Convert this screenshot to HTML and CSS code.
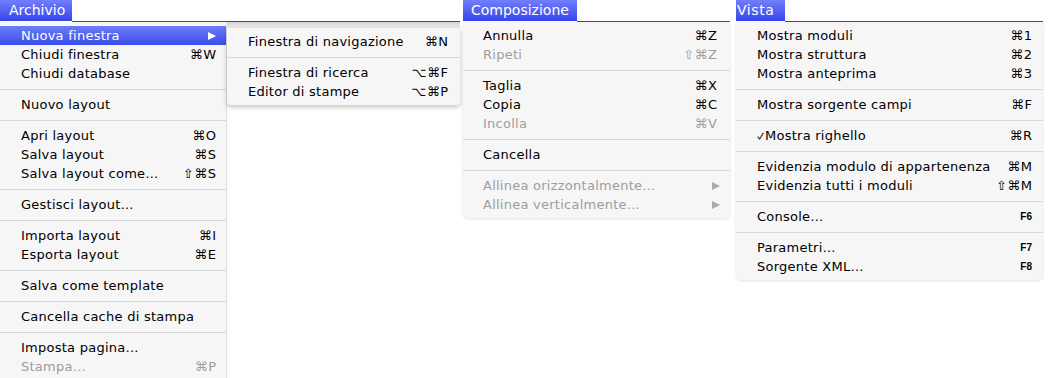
FILE: index.html
```html
<!DOCTYPE html>
<html lang="it">

<head>
    <meta charset="UTF-8">
    <title>Menu</title>
    <link rel="stylesheet" href="styles.css">
</head>

<body>

    <!-- Archivio -->
    <div class="shot shot-file">
        <div class="menubar">
            <div class="title title-file">Archivio</div>
            <div class="bar-rest"></div>
        </div>
        <div class="shot-body">
            <ul class="menu menu-file">
                <li class="item active"><span>Nuova finestra</span><span class="arrow"></span></li>
                <li class="item"><span>Chiudi finestra</span><span class="key">⌘W</span></li>
                <li class="item"><span>Chiudi database</span></li>
                <li class="sep"></li>
                <li class="item"><span>Nuovo layout</span></li>
                <li class="sep"></li>
                <li class="item"><span>Apri layout</span><span class="key">⌘O</span></li>
                <li class="item"><span>Salva layout</span><span class="key">⌘S</span></li>
                <li class="item"><span>Salva layout come…</span><span class="key">⇧⌘S</span></li>
                <li class="sep"></li>
                <li class="item"><span>Gestisci layout…</span></li>
                <li class="sep"></li>
                <li class="item"><span>Importa layout</span><span class="key">⌘I</span></li>
                <li class="item"><span>Esporta layout</span><span class="key">⌘E</span></li>
                <li class="sep"></li>
                <li class="item"><span>Salva come template</span></li>
                <li class="sep"></li>
                <li class="item"><span>Cancella cache di stampa</span></li>
                <li class="sep"></li>
                <li class="item"><span>Imposta pagina…</span></li>
                <li class="item off"><span>Stampa…</span><span class="key">⌘P</span></li>
            </ul>
            <div class="sub-wrap">
                <ul class="menu submenu">
                    <li class="item"><span>Finestra di navigazione</span><span class="key">⌘N</span></li>
                    <li class="sep"></li>
                    <li class="item"><span>Finestra di ricerca</span><span class="key">⌥⌘F</span></li>
                    <li class="item"><span>Editor di stampe</span><span class="key">⌥⌘P</span></li>
                </ul>
            </div>
        </div>
    </div>

    <!-- Composizione -->
    <div class="shot shot-edit">
        <div class="menubar">
            <div class="title title-edit">Composizione</div>
            <div class="bar-rest"></div>
        </div>
        <ul class="menu menu-edit">
            <li class="item"><span>Annulla</span><span class="key">⌘Z</span></li>
            <li class="item off"><span>Ripeti</span><span class="key">⇧⌘Z</span></li>
            <li class="sep"></li>
            <li class="item"><span>Taglia</span><span class="key">⌘X</span></li>
            <li class="item"><span>Copia</span><span class="key">⌘C</span></li>
            <li class="item off"><span>Incolla</span><span class="key">⌘V</span></li>
            <li class="sep"></li>
            <li class="item"><span>Cancella</span></li>
            <li class="sep"></li>
            <li class="item off"><span>Allinea orizzontalmente…</span><span class="arrow arrow-out"></span></li>
            <li class="item off"><span>Allinea verticalmente…</span><span class="arrow arrow-out"></span></li>
        </ul>
    </div>

    <!-- Vista -->
    <div class="shot shot-view">
        <div class="menubar">
            <div class="title title-view">Vista</div>
            <div class="bar-rest"></div>
        </div>
        <ul class="menu menu-view">
            <li class="item"><span>Mostra moduli</span><span class="key">⌘1</span></li>
            <li class="item"><span>Mostra struttura</span><span class="key">⌘2</span></li>
            <li class="item"><span>Mostra anteprima</span><span class="key">⌘3</span></li>
            <li class="sep"></li>
            <li class="item"><span>Mostra sorgente campi</span><span class="key">⌘F</span></li>
            <li class="sep"></li>
            <li class="item"><span class="checked"><svg class="check" width="7" height="8" viewBox="0 0 7 8"><path d="M0.6 4.6 L2.6 7 L6.4 0.8" fill="none" stroke="#444" stroke-width="1.3"/></svg>Mostra righello</span><span class="key">⌘R</span></li>
            <li class="sep"></li>
            <li class="item"><span>Evidenzia modulo di appartenenza</span><span class="key">⌘M</span></li>
            <li class="item"><span>Evidenzia tutti i moduli</span><span class="key">⇧⌘M</span></li>
            <li class="sep"></li>
            <li class="item"><span>Console…</span><span class="key fn">F6</span></li>
            <li class="sep"></li>
            <li class="item"><span>Parametri…</span><span class="key fn">F7</span></li>
            <li class="item"><span>Sorgente XML…</span><span class="key fn">F8</span></li>
        </ul>
    </div>

</body>

</html>
```

FILE: styles.css
```css
html,
body {
    margin: 0;
    height: 100%;
    overflow: hidden;
    background: #fff;
}

body {
    font-family: "DejaVu Sans", sans-serif;
    font-size: 13px;
    letter-spacing: 0.25px;
    color: #000;
    display: flex;
    align-items: flex-start;
}

.shot {
    display: flex;
    flex-direction: column;
}

.shot-file {
    width: 460px;
}

.shot-edit {
    width: 267px;
    margin-left: 3px;
}

.shot-view {
    width: 307px;
    margin-left: 6px;
}

/* menubar strip */
.menubar {
    display: flex;
    height: 22px;
}

.title {
    height: 21px;
    line-height: 21px;
    font-size: 14px;
    letter-spacing: 0;
    color: #fff;
    background: linear-gradient(to bottom, #717ffb, #3644ec);
    box-sizing: border-box;
    white-space: nowrap;
}

.title-file {
    width: 72px;
    padding-left: 9px;
}

.title-edit {
    width: 114px;
    padding-left: 8px;
}

.title-view {
    width: 49px;
    padding-left: 1px;
    letter-spacing: 0.6px;
}

.bar-rest {
    flex: 1;
    height: 21px;
    border-bottom: 1px solid #4f4f4f;
}

/* menus */
.shot-body {
    display: flex;
    align-items: flex-start;
}

.menu {
    list-style: none;
    margin: 0;
    padding: 4px 0;
    background: #f6f6f6;
}

.item {
    display: flex;
    justify-content: space-between;
    align-items: center;
    height: 19px;
    padding: 0 10px 0 21px;
    white-space: nowrap;
}

.item.active {
    background: linear-gradient(to bottom, #6c7df8, #3a4ceb);
    color: #fff;
}

.item.off {
    color: #9d9d9d;
}

.sep {
    height: 12px;
    background: linear-gradient(#d8d8d8, #d8d8d8) 0 6px / 100% 1px no-repeat;
}

.key {
    white-space: nowrap;
    letter-spacing: 0.5px;
    margin-right: -0.5px;
}

.fn {
    font-family: "Liberation Sans", sans-serif;
    font-weight: bold;
    font-size: 10px;
    letter-spacing: 0;
    margin-right: 0;
}

.arrow {
    width: 0;
    height: 0;
    border-left: 8px solid currentColor;
    border-top: 4.5px solid transparent;
    border-bottom: 4.5px solid transparent;
}

.item.off .arrow {
    border-left-color: #ababab;
}

.arrow-out {
    margin-right: -3px;
}

.menu-file {
    width: 226px;
    padding-bottom: 10px;
    box-shadow: 1px 0 1px rgba(0, 0, 0, 0.12);
}

.sub-wrap {
    margin-left: 1px;
    padding-top: 6px;
    background: linear-gradient(to bottom, #d2d2d2, #efefef) top / 100% 6px no-repeat;
}

.submenu {
    width: 233px;
    border-radius: 0 0 4px 4px;
    box-shadow: 0 2px 5px rgba(0, 0, 0, 0.25);
}

.submenu .item {
    padding-right: 12px;
}

.menu-edit,
.menu-view {
    border-radius: 0 0 5px 5px;
    box-shadow: 0 1px 3px rgba(0, 0, 0, 0.12);
}

.menu-edit .item {
    padding: 0 13px 0 20px;
}

.menu-view .item {
    padding-right: 11px;
}

.checked {
    display: flex;
    align-items: center;
}

.check {
    margin-right: 1px;
}
```
